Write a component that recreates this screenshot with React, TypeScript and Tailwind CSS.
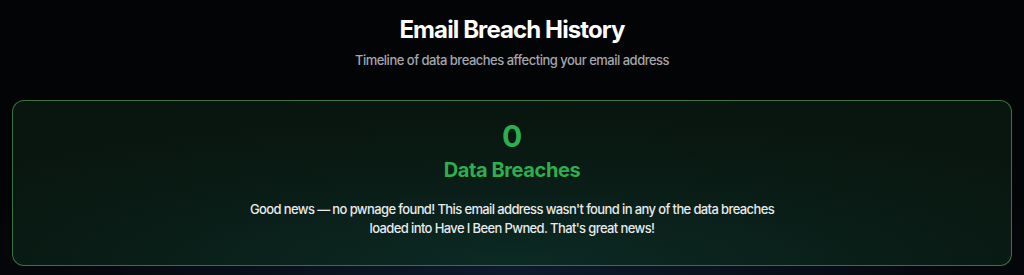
import React from "react";

export default function App() {
  return (
    <div
      className="w-[1024px] h-[275px] overflow-hidden bg-[#030406] bg-[radial-gradient(ellipse_60%_45%_at_50%_100%,#0c1a2c_0%,#05080d_70%,#030406_100%)] px-3 pt-[14px]"
      style={{ fontFamily: "Inter, 'Noto Sans', sans-serif" }}
    >
      <div className="flex flex-col items-center">
        <h1 className="text-[24px] leading-[32px] font-bold tracking-[-0.9px] text-white">
          Email Breach History
        </h1>
        <p className="mt-[5px] text-[13px] leading-[18px] font-medium tracking-[-0.5px] text-[#a3a6ad]">
          Timeline of data breaches affecting your email address
        </p>
      </div>
      <div className="mt-[31px] h-[166px] rounded-[12px] border border-[#448a4e]/80 bg-[#091712] bg-[radial-gradient(ellipse_70%_90%_at_50%_100%,#0c2a24_0%,#0a1d17_55%,#09160f_100%)] flex flex-col items-center pt-[17px]">
        <div className="text-[30px] leading-[36px] font-bold text-[#2fae4e]">0</div>
        <div className="mt-[2px] text-[20px] leading-[28px] font-bold tracking-[-0.4px] text-[#2fae4e]">
          Data Breaches
        </div>
        <p className="mt-[16px] w-[560px] text-center text-[13px] leading-[19px] font-medium tracking-[-0.62px] text-[#e8eaec]">
          Good news — no pwnage found! This email address wasn't found in any of the data breaches loaded into Have I Been Pwned. That's great news!
        </p>
      </div>
    </div>
  );
}
